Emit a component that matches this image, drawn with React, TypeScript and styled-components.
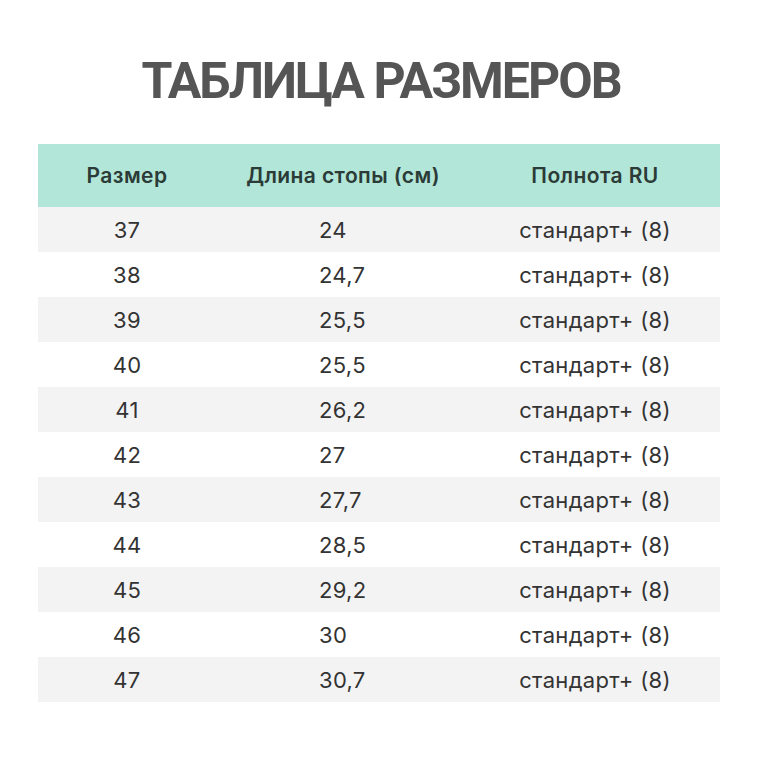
import React from "react";
import styled, { createGlobalStyle } from "styled-components";

const Global = createGlobalStyle`
  html, body { margin: 0; padding: 0; background: #ffffff; }
  body { font-family: Inter, Roboto, "Noto Sans", sans-serif; }
`;

const Page = styled.div`
  width: 760px;
  height: 760px;
  box-sizing: border-box;
  padding: 48px 40px 0 38px;
  display: flex;
  flex-direction: column;
  align-items: stretch;
`;

const Title = styled.h1`
  margin: 0 0 30px 0;
  font-family: Roboto, sans-serif;
  font-weight: 700;
  font-size: 50px;
  line-height: 66px;
  letter-spacing: -2px;
  color: #555555;
  text-align: center;
  padding-left: 4px;
`;

const Table = styled.div`
  display: grid;
  grid-template-columns: 178px 254px 250px;
  width: 682px;
`;

const HeadCell = styled.div`
  background: #b2e6d8;
  height: 63px;
  display: flex;
  align-items: center;
  justify-content: center;
  font-family: Inter, sans-serif;
  font-weight: 600;
  font-size: 21px;
  letter-spacing: 0.4px;
  color: #2b3b37;
`;

const Cell = styled.div<{ $grey: boolean; $left?: boolean }>`
  background: ${(p) => (p.$grey ? "#f3f3f3" : "#ffffff")};
  height: 45px;
  display: flex;
  align-items: center;
  justify-content: ${(p) => (p.$left ? "flex-start" : "center")};
  padding-left: ${(p) => (p.$left ? "103px" : "0")};
  box-sizing: border-box;
  font-family: Inter, sans-serif;
  font-size: 22px;
  letter-spacing: 0.3px;
  color: #333333;
`;

const rows: [string, string][] = [
  ["37", "24"],
  ["38", "24,7"],
  ["39", "25,5"],
  ["40", "25,5"],
  ["41", "26,2"],
  ["42", "27"],
  ["43", "27,7"],
  ["44", "28,5"],
  ["45", "29,2"],
  ["46", "30"],
  ["47", "30,7"],
];

export default function App() {
  return (
    <>
      <Global />
      <Page>
        <Title>ТАБЛИЦА РАЗМЕРОВ</Title>
        <Table>
          <HeadCell>Размер</HeadCell>
          <HeadCell>Длина стопы (см)</HeadCell>
          <HeadCell>Полнота RU</HeadCell>
          {rows.map(([size, len], i) => (
            <React.Fragment key={size}>
              <Cell $grey={i % 2 === 0}>{size}</Cell>
              <Cell $grey={i % 2 === 0} $left>
                {len}
              </Cell>
              <Cell $grey={i % 2 === 0}>стандарт+ (8)</Cell>
            </React.Fragment>
          ))}
        </Table>
      </Page>
    </>
  );
}
